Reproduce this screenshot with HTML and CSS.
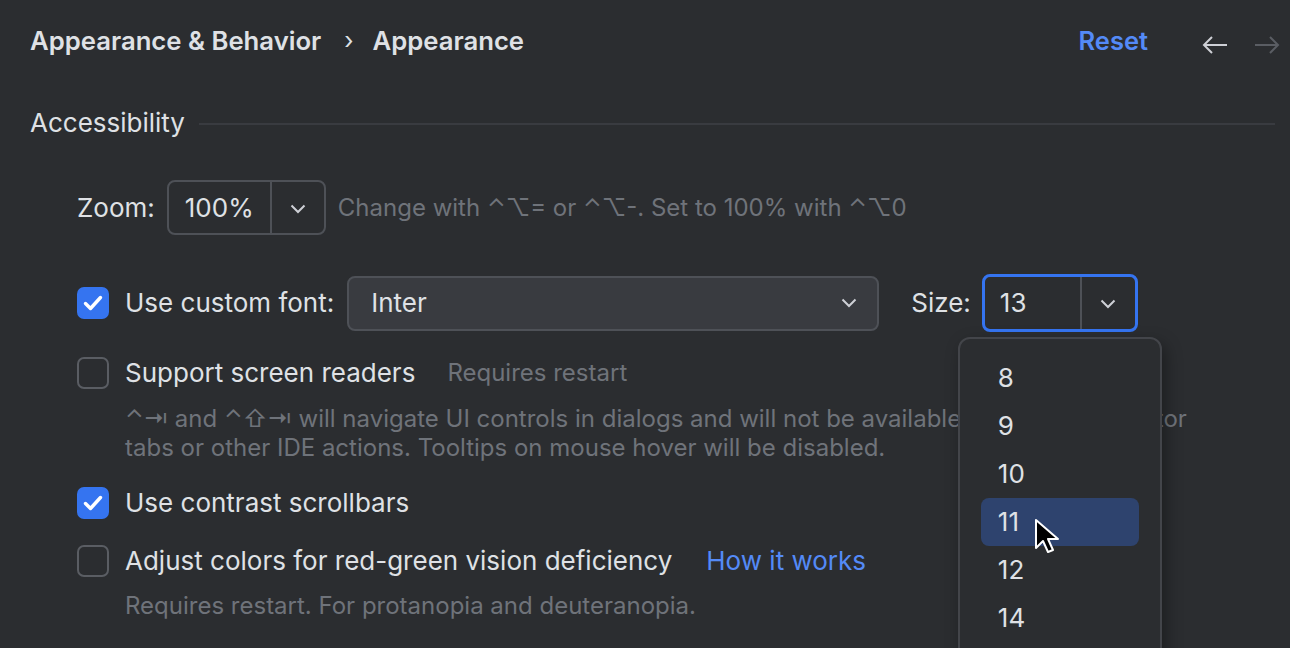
FILE: index.html
```html
<!DOCTYPE html>
<html lang="en">
<head>
  <meta charset="UTF-8">
  <title>Appearance</title>
  <link rel="stylesheet" href="styles.css">
</head>
<body>
  <div class="settings">
    <header class="top">
      <nav class="crumbs">
        <span>Appearance &amp; Behavior</span>
        <span class="sep">›</span>
        <span>Appearance</span>
      </nav>
      <a class="reset" href="#">Reset</a>
      <div class="history">
        <svg width="26" height="20" viewBox="0 0 26 20"><path d="M25 10H2M10 2L2 10l8 8" fill="none" stroke="#ced0d6" stroke-width="2"/></svg>
        <svg class="disabled" width="26" height="20" viewBox="0 0 26 20"><path d="M1 10h23M16 2l8 8-8 8" fill="none" stroke="#5a5d63" stroke-width="2"/></svg>
      </div>
    </header>

    <section class="group">
      <div class="group-title"><span>Accessibility</span><div class="rule"></div></div>

      <div class="row zoom-row">
        <span class="label">Zoom:</span>
        <div class="combo split">
          <span class="value">100%</span>
          <span class="arrow"><svg width="16" height="10" viewBox="0 0 16 10"><path d="M1.5 1.5L8 8l6.5-6.5" fill="none" stroke="#ced0d6" stroke-width="2"/></svg></span>
        </div>
        <span class="hint">Change with ⌃⌥= or ⌃⌥-. Set to 100% with ⌃⌥0</span>
      </div>

      <div class="row font-row">
        <span class="check on"><svg width="20" height="16" viewBox="0 0 20 16"><path d="M2.5 8.5l5 5L17.5 2.5" fill="none" stroke="#fff" stroke-width="3.4" stroke-linecap="round" stroke-linejoin="round"/></svg></span>
        <span class="label">Use custom font:</span>
        <div class="combo font-combo">
          <span class="value">Inter</span>
          <svg width="16" height="10" viewBox="0 0 16 10"><path d="M1.5 1.5L8 8l6.5-6.5" fill="none" stroke="#ced0d6" stroke-width="2"/></svg>
        </div>
        <span class="label size-label">Size:</span>
        <div class="size-wrap">
          <div class="combo split focused">
            <span class="value">13</span>
            <span class="arrow"><svg width="16" height="10" viewBox="0 0 16 10"><path d="M1.5 1.5L8 8l6.5-6.5" fill="none" stroke="#ced0d6" stroke-width="2"/></svg></span>
          </div>
          <ul class="popup">
            <li>8</li>
            <li>9</li>
            <li>10</li>
            <li class="selected">11</li>
            <li>12</li>
            <li>14</li>
          </ul>
          <svg class="pointer" width="26" height="38" viewBox="0 0 26 38"><path d="M2 2v28l7-7 5 11 5-2-5-11h10z" fill="#000" stroke="#fff" stroke-width="2" stroke-linejoin="round"/></svg>
        </div>
      </div>

      <div class="row reader-row">
        <span class="check"></span>
        <span class="label">Support screen readers</span>
        <span class="hint restart">Requires restart</span>
      </div>
      <p class="desc">⌃⇥ and ⌃⇧⇥ will navigate UI controls in dialogs and will not be available for switching editor<br>tabs or other IDE actions. Tooltips on mouse hover will be disabled.</p>

      <div class="row scroll-row">
        <span class="check on"><svg width="20" height="16" viewBox="0 0 20 16"><path d="M2.5 8.5l5 5L17.5 2.5" fill="none" stroke="#fff" stroke-width="3.4" stroke-linecap="round" stroke-linejoin="round"/></svg></span>
        <span class="label">Use contrast scrollbars</span>
      </div>

      <div class="row color-row">
        <span class="check"></span>
        <span class="label">Adjust colors for red-green vision deficiency</span>
        <a class="link" href="#">How it works</a>
      </div>
      <p class="desc last">Requires restart. For protanopia and deuteranopia.</p>
    </section>
  </div>
</body>
</html>
```

FILE: styles.css
```css
*{margin:0;padding:0;box-sizing:border-box;}
html,body{height:100%;overflow:hidden;}
body{background:#2b2d30;color:#dfe1e5;font-family:Inter,"Noto Sans","DejaVu Sans",sans-serif;font-size:26px;line-height:1;}
a{text-decoration:none;}

.top{height:82px;display:flex;align-items:center;padding:0 10px 0 30px;}
.crumbs{flex:1;display:flex;align-items:center;font-weight:600;font-size:25.7px;}
.crumbs .sep{font-weight:400;margin:0 19px 0 23px;font-size:24px;}
.reset{color:#548af7;font-weight:600;font-size:25.5px;margin-right:54px;}
.history{display:flex;gap:26px;margin-top:8px;}

.group-title{display:flex;align-items:center;height:42px;margin-top:20px;padding-left:30px;}
.group-title .rule{flex:1;height:2px;background:#393b40;margin:2px 15px 0 14px;}

.row{display:flex;align-items:center;padding-left:77px;}
.label{white-space:nowrap;}
.hint{color:#6f737a;white-space:nowrap;font-size:24px;}

.combo{display:flex;align-items:center;border:2px solid #4e5157;border-radius:8px;height:55px;}
.combo .value{padding-left:16px;}
.split .value{width:101px;}
.split .arrow{align-self:stretch;border-left:2px solid #4e5157;width:54px;display:flex;align-items:center;justify-content:center;padding-top:2px;}

.zoom-row{height:55px;margin-top:36px;}
.zoom-row .combo{margin:0 12px 0 12px;}

.font-row{height:58px;margin-top:39px;}
.font-combo{width:532px;margin-left:13px;background:#393b40;justify-content:space-between;padding:0 20px 0 22px;}
.font-combo .value{padding-left:0;}
.size-label{margin-left:32px;margin-right:11px;}
.size-wrap{position:relative;}
.focused{border:3px solid #3574f0;height:58px;width:156px;}
.focused .value{width:97px;padding-left:15px;}
.focused .arrow{width:56px;}

.check{width:32px;height:32px;border-radius:7px;border:2px solid #5a5d63;margin-right:16px;display:flex;align-items:center;justify-content:center;flex-shrink:0;}
.check.on{background:#3574f0;border-color:#3574f0;}

.reader-row{height:32px;margin-top:25px;}
.restart{margin-left:32px;}
.desc{color:#6f737a;font-size:24px;line-height:29px;padding-left:125px;margin-top:15px;white-space:nowrap;}
.scroll-row{height:32px;margin-top:25px;}
.color-row{height:32px;margin-top:26px;}
.link{color:#548af7;margin-left:34px;}
.desc.last{margin-top:14px;}

/* size dropdown list */
.popup{position:absolute;top:63px;left:-24px;width:204px;height:330px;list-style:none;background:#2b2d30;border:2px solid #43454a;border-radius:12px;padding:15px 21px;box-shadow:4px 6px 16px rgba(0,0,0,0.35);z-index:5;}
.popup li{height:48px;display:flex;align-items:center;padding-left:17px;border-radius:8px;}
.popup li.selected{background:#2e436e;}
.pointer{position:absolute;top:244px;left:52px;z-index:6;}
```
